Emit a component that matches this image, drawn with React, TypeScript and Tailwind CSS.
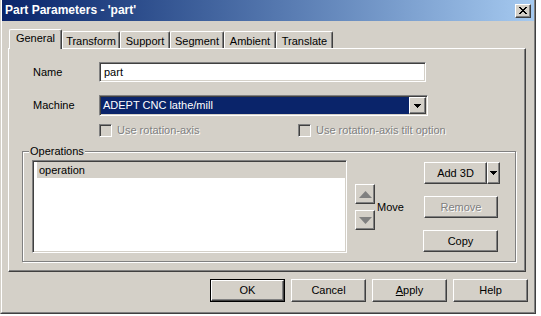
import React from "react";

// classic win2000 bevels
const raised =
  "border border-t-white border-l-white border-r-[#404040] border-b-[#404040] shadow-[inset_-1px_-1px_0_#808080] bg-[#d4d0c8]";
const sunken =
  "border border-t-[#808080] border-l-[#808080] border-r-white border-b-white shadow-[inset_1px_1px_0_#404040,inset_-1px_-1px_0_#d4d0c8]";
const disabledText = "text-[#808080] [text-shadow:1px_1px_0_#ffffff]";

const CloseGlyph = () => (
  <svg width="8" height="7" viewBox="0 0 8 7" shapeRendering="crispEdges">
    <path
      d="M0 0h2v1h-2z M6 0h2v1h-2z M1 1h2v1h-2z M5 1h2v1h-2z M2 2h4v1h-4z M3 3h2v1h-2z M2 4h4v1h-4z M1 5h2v1h-2z M5 5h2v1h-2z M0 6h2v1h-2z M6 6h2v1h-2z"
      fill="#000"
    />
  </svg>
);

const DownArrow = () => (
  <svg width="7" height="4" viewBox="0 0 7 4" shapeRendering="crispEdges">
    <path d="M0 0h7v1h-7z M1 1h5v1h-5z M2 2h3v1h-3z M3 3h1v1h-1z" fill="#000" />
  </svg>
);

const MoveArrow = ({ up }: { up?: boolean }) => (
  <svg width="13" height="7" viewBox="0 0 13 7">
    <polygon points={up ? "6.5,0 13,7 0,7" : "0,0 13,0 6.5,7"} fill="#808080" />
  </svg>
);

const Checkbox = ({ label, className }: { label: string; className?: string }) => (
  <div className={`flex items-center ${className ?? ""}`}>
    <div className={`${sunken} w-[13px] h-[13px] bg-[#d4d0c8]`} />
    <span className={`ml-[5px] ${disabledText}`}>{label}</span>
  </div>
);

const tabs = [
  { name: "General", w: "w-[53px]" },
  { name: "Transform", w: "w-[58px]" },
  { name: "Support", w: "w-[50px]" },
  { name: "Segment", w: "w-[54px]" },
  { name: "Ambient", w: "w-[52px]" },
  { name: "Translate", w: "w-[57px]" },
];

export default function App() {
  return (
    <div className="w-[541px] h-[316px] bg-white font-['Liberation_Sans',Arial,sans-serif] text-[11px] leading-[13px] text-black">
      <div className="w-[536px] h-[314px] bg-[#d4d0c8] flex flex-col border-l border-r border-b border-l-[#d4d0c8] border-r-[#404040] border-b-[#404040]">
        <div className="flex-1 flex flex-col border-l border-r border-b border-l-white border-r-[#808080] border-b-[#808080]">
          {/* title bar */}
          <div className="h-[21px] flex items-center bg-gradient-to-r from-[#0a246a] to-[#a6caf0] pl-[3px] pr-[3px]">
            <span className="text-white font-bold text-[12px]">Part Parameters - 'part'</span>
            <div className={`${raised} ml-auto w-[16px] h-[14px] flex items-center justify-center`}>
              <CloseGlyph />
            </div>
          </div>

          <div className="pl-[6px] flex flex-col">
            {/* tabs */}
            <div className="mt-[8px] h-[19px] flex items-end pl-px">
              {tabs.map((t, i) =>
                i === 0 ? (
                  <div
                    key={t.name}
                    className={`${t.w} h-[20px] -mb-px relative z-10 bg-[#d4d0c8] rounded-t-[2px] border-t border-l border-r border-t-white border-l-white border-r-[#404040] shadow-[inset_-1px_0_0_#808080] pt-[2px] text-center`}
                  >
                    {t.name}
                  </div>
                ) : (
                  <div
                    key={t.name}
                    className={`${t.w} h-[17px] rounded-t-[2px] border-t border-l border-r border-t-white border-l-white border-r-[#404040] shadow-[inset_-1px_0_0_#808080] pt-[3px] text-center`}
                  >
                    {t.name}
                  </div>
                )
              )}
            </div>

            {/* tab panel */}
            <div className="w-[518px] h-[224px] border border-t-white border-l-white border-r-[#404040] border-b-[#404040] shadow-[inset_-1px_-1px_0_#808080] flex flex-col">
              <div className="mt-[13px] pl-[24px] flex items-center">
                <span className="w-[66px]">Name</span>
                <div className={`${sunken} w-[327px] h-[20px] bg-white flex items-center pl-[4px]`}>part</div>
              </div>

              <div className="mt-[13px] pl-[24px] flex items-center">
                <span className="w-[66px]">Machine</span>
                <div className={`${sunken} w-[329px] h-[21px] bg-white flex p-px`}>
                  <div className="flex-1 bg-[#0a246a] text-white flex items-center pl-[2px]">ADEPT CNC lathe/mill</div>
                  <div className={`${raised} w-[17px] flex items-center justify-center`}>
                    <DownArrow />
                  </div>
                </div>
              </div>

              <div className="mt-[8px] pl-[90px] flex">
                <Checkbox label="Use rotation-axis" className="w-[199px]" />
                <Checkbox label="Use rotation-axis tilt option" />
              </div>

              {/* operations group */}
              <div className="mt-[14px] ml-[13px] w-[494px] h-[111px] relative border border-[#808080] shadow-[inset_1px_1px_0_#ffffff,1px_1px_0_#ffffff] pt-[8px] pl-[9px] flex items-start">
                <span className="absolute left-[6px] -top-[7px] bg-[#d4d0c8] px-px">Operations</span>

                <div className={`${sunken} w-[315px] h-[93px] bg-white pt-px`}>
                  <div className="ml-[4px] h-[16px] bg-[#d4d0c8] flex items-center pl-[2px]">operation</div>
                </div>

                <div className="ml-[8px] mt-[24px] w-[68px] flex items-center">
                  <div className="flex flex-col gap-[6px]">
                    <div className={`${raised} w-[20px] h-[20px] flex items-center justify-center`}>
                      <MoveArrow up />
                    </div>
                    <div className={`${raised} w-[20px] h-[20px] flex items-center justify-center`}>
                      <MoveArrow />
                    </div>
                  </div>
                  <span className="ml-[2px]">Move</span>
                </div>

                <div className="mt-[2px] w-[77px] flex flex-col">
                  <div className="ml-px h-[22px] flex">
                    <div className={`${raised} w-[63px] flex items-center justify-center`}>Add 3D</div>
                    <div className={`${raised} w-[13px] flex items-center justify-center`}>
                      <DownArrow />
                    </div>
                  </div>
                  <div className={`${raised} ml-px mt-[12px] w-[74px] h-[22px] flex items-center justify-center ${disabledText}`}>
                    Remove
                  </div>
                  <div className={`${raised} mt-[12px] w-[75px] h-[22px] flex items-center justify-center`}>Copy</div>
                </div>
              </div>
            </div>
          </div>

          {/* dialog buttons */}
          <div className="mt-[7px] flex justify-end gap-[6px] pr-[6px]">
            <div className="w-[75px] h-[23px] border border-black flex">
              <div className={`${raised} flex-1 flex items-center justify-center`}>OK</div>
            </div>
            <div className={`${raised} w-[75px] h-[23px] flex items-center justify-center`}>Cancel</div>
            <div className={`${raised} w-[75px] h-[23px] flex items-center justify-center`}>
              <span>
                <span className="underline">A</span>pply
              </span>
            </div>
            <div className={`${raised} w-[75px] h-[23px] flex items-center justify-center`}>Help</div>
          </div>
        </div>
      </div>
    </div>
  );
}
